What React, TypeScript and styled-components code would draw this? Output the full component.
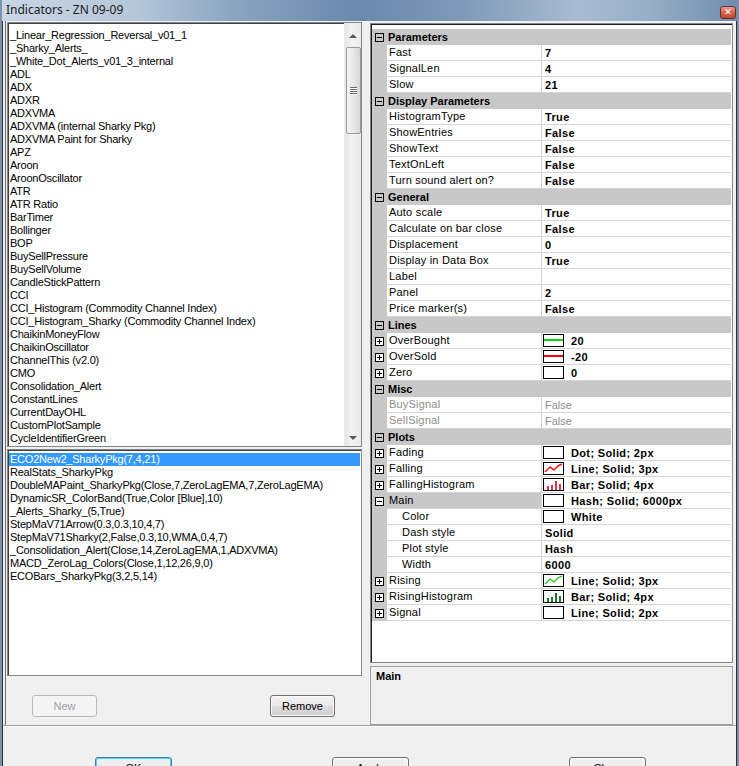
import React from "react";
import styled, { createGlobalStyle } from "styled-components";

const GlobalStyle = createGlobalStyle`
  html, body {
    margin: 0;
    padding: 0;
    background: #f0f0f0;
  }
  * {
    box-sizing: border-box;
  }
`;

const Window = styled.div`
  width: 739px;
  height: 766px;
  overflow: hidden;
  display: flex;
  flex-direction: column;
  background: #f0f0f0;
  border-left: 2px solid #7d93ad;
  border-right: 2px solid #7d93ad;
  font-family: "Liberation Sans", Arial, sans-serif;
  font-size: 11px;
  color: #000;
`;

const TitleBar = styled.div`
  height: 21px;
  flex: none;
  display: flex;
  justify-content: space-between;
  align-items: flex-start;
  margin: 0 -2px;
  padding: 0 3px 0 6px;
  background: linear-gradient(
    90deg,
    #c9d6e4 0%,
    #b6c7da 18%,
    #8aa4c1 32%,
    #6a89ad 48%,
    #7d98b8 62%,
    #a9bbd0 78%,
    #98aec8 88%,
    #6f8cae 100%
  );
`;

const Title = styled.span`
  font-family: "Noto Sans", "Open Sans", sans-serif;
  font-size: 12px;
  line-height: 20px;
  color: #1a1a1a;
`;

const CloseButton = styled.div`
  width: 16px;
  height: 13px;
  margin-top: 6px;
  border: 1px solid #6b2c22;
  border-radius: 3px;
  background: linear-gradient(180deg, #e9a08e 0%, #d4654f 50%, #c2452f 100%);
  display: flex;
  align-items: center;
  justify-content: center;
  color: #fff;
  font-family: "DejaVu Sans", sans-serif;
  font-size: 9px;
  font-weight: bold;
  line-height: 1;
`;

const Client = styled.div`
  flex: 1;
  display: flex;
  flex-direction: column;
  border-left: 1px solid #2c2f33;
  border-right: 1px solid #2c2f33;
`;

const Split = styled.div`
  height: 705px;
  flex: none;
  display: flex;
  border-bottom: 1px solid #a0a0a0;
  box-shadow: 0 1px 0 #ffffff;
`;

const LeftPane = styled.div`
  width: 358px;
  margin-left: 2px;
  padding: 1px 0 0 1px;
  border-left: 1px solid #6f6f6f;
  display: flex;
  flex-direction: column;
`;

const ListBox = styled.div<{ $height: number; $gap?: number }>`
  width: 355px;
  height: ${(p) => p.$height}px;
  margin-top: ${(p) => p.$gap || 0}px;
  flex: none;
  display: flex;
  background: #fff;
  border: 1px solid #828790;
  box-shadow: inset 1px 1px 0 #3f3f3f;
  overflow: hidden;
`;

const Items = styled.div<{ $pad: number }>`
  flex: 1;
  padding: ${(p) => p.$pad}px 1px 0 1px;
  letter-spacing: -0.22px;
`;

const Item = styled.div<{ $selected?: boolean }>`
  height: 13px;
  line-height: 13px;
  padding-left: 1px;
  white-space: nowrap;
  background: ${(p) => (p.$selected ? "#3399ff" : "transparent")};
  color: ${(p) => (p.$selected ? "#fff" : "#000")};
`;

const ScrollBar = styled.div`
  width: 17px;
  flex: none;
  display: flex;
  flex-direction: column;
  align-items: center;
  background: linear-gradient(90deg, #e6e6e6, #f2f2f2 40%, #eaeaea);
  border-left: 1px solid #ececec;
`;

const Arrow = styled.div<{ $down?: boolean }>`
  height: 17px;
  width: 17px;
  flex: none;
  display: flex;
  align-items: center;
  justify-content: center;
  margin-top: ${(p) => (p.$down ? 0 : 4)}px;
  &::before {
    content: "";
    width: 0;
    height: 0;
    border-left: 4px solid transparent;
    border-right: 4px solid transparent;
    ${(p) =>
      p.$down ? "border-top: 4px solid #5a5a5a;" : "border-bottom: 4px solid #5a5a5a;"}
  }
`;

const Thumb = styled.div`
  width: 15px;
  height: 87px;
  margin-top: 3px;
  flex: none;
  border: 1px solid #9b9b9b;
  border-radius: 2px;
  background: linear-gradient(90deg, #f4f4f4 0%, #e8e8e8 50%, #d6d6d6 100%);
  display: flex;
  flex-direction: column;
  align-items: center;
  justify-content: center;
  gap: 1px;
`;

const Grip = styled.div`
  width: 7px;
  height: 1px;
  background: #6b6b6b;
  box-shadow: 0 1px 0 #fff;
`;

const Spacer = styled.div`
  flex: 1;
`;

const ButtonRow = styled.div`
  display: flex;
  padding: 19px 0 0 25px;
  gap: 173px;
`;

const Button = styled.div<{ $disabled?: boolean; $default?: boolean; $width?: number }>`
  width: ${(p) => p.$width || 65}px;
  height: 22px;
  flex: none;
  display: flex;
  align-items: center;
  justify-content: center;
  border-radius: 3px;
  border: 1px solid
    ${(p) => (p.$disabled ? "#b7babc" : p.$default ? "#3c7fb1" : "#707070")};
  background: ${(p) =>
    p.$disabled
      ? "#f4f4f4"
      : "linear-gradient(180deg, #f2f2f2 0%, #ebebeb 45%, #dddddd 50%, #cfcfcf 100%)"};
  box-shadow: ${(p) =>
    p.$default ? "inset 0 0 0 1px #48d4ff" : p.$disabled ? "none" : "inset 0 0 0 1px #fcfcfc"};
  color: ${(p) => (p.$disabled ? "#a0a0a0" : "#000")};
  font-size: 11px;
`;

const RightPane = styled.div`
  width: 363px;
  margin-left: 7px;
  padding-top: 2px;
  display: flex;
  flex-direction: column;
`;

const Grid = styled.div`
  height: 640px;
  flex: none;
  background: #fff;
  border: 1px solid #828790;
  box-shadow: inset 1px 1px 0 #1e1e1e;
  padding: 5px 1px 0 1px;
  overflow: hidden;
`;

const LINE = "#d4d4d4";
const CAT = "#c8c8c8";

const CategoryRow = styled.div`
  height: 16px;
  display: flex;
  align-items: center;
  background: ${CAT};
  font-weight: bold;
`;

const PropRow = styled.div`
  height: 16px;
  display: flex;
`;

const Margin = styled.div`
  width: 15px;
  flex: none;
  display: flex;
  align-items: center;
  justify-content: center;
  background: ${CAT};
`;

const Expander = styled.div`
  width: 9px;
  height: 9px;
  border: 1px solid #000;
  background: #fff;
  position: relative;
  &::before {
    content: "";
    position: absolute;
    left: 1px;
    top: 3px;
    width: 5px;
    height: 1px;
    background: #000;
  }
`;

const ExpanderPlus = styled(Expander)`
  &::after {
    content: "";
    position: absolute;
    left: 3px;
    top: 1px;
    width: 1px;
    height: 5px;
    background: #000;
  }
`;

const CatExpander = styled(Expander)`
  margin: 0 4px 0 3px;
  background: transparent;
`;

const LabelCell = styled.div<{ $indent?: boolean; $selected?: boolean; $disabled?: boolean }>`
  width: 155px;
  flex: none;
  padding-left: ${(p) => (p.$indent ? 15 : 2)}px;
  line-height: 15px;
  letter-spacing: 0.2px;
  white-space: nowrap;
  overflow: hidden;
  border-right: 1px solid ${LINE};
  border-bottom: 1px solid ${LINE};
  background: ${(p) => (p.$selected ? CAT : "#fff")};
  color: ${(p) => (p.$disabled ? "#8d8d8d" : "#000")};
`;

const ValueCell = styled.div<{ $disabled?: boolean; $swatch?: boolean }>`
  flex: 1;
  display: flex;
  align-items: center;
  gap: 7px;
  padding-left: ${(p) => (p.$swatch ? 1 : 3)}px;
  border-bottom: 1px solid ${LINE};
  font-weight: ${(p) => (p.$disabled ? "normal" : "bold")};
  letter-spacing: ${(p) => (p.$disabled ? 0 : 0.35)}px;
  color: ${(p) => (p.$disabled ? "#8d8d8d" : "#000")};
  white-space: nowrap;
`;

const Description = styled.div`
  height: 59px;
  margin-top: 3px;
  border: 1px solid #a0a0a0;
  padding: 3px 5px;
  font-weight: bold;
`;

const Footer = styled.div`
  flex: 1;
  display: flex;
  padding: 31px 0 0 92px;
  gap: 160px;
`;

type SwatchKind = "green" | "red" | "white" | "fallLine" | "fallBars" | "riseLine" | "riseBars";

const Swatch = ({ kind }: { kind: SwatchKind }) => {
  const red = "#ef1f1f";
  const green = "#22c322";
  return (
    <svg width="21" height="13" viewBox="0 0 21 13" style={{ flex: "none" }}>
      <rect x="0.5" y="0.5" width="20" height="12" fill="#fff" stroke="#000" />
      {kind === "green" && <rect x="1" y="5" width="19" height="2" fill="#00e000" />}
      {kind === "red" && <rect x="1" y="5" width="19" height="2" fill="#ff0000" />}
      {kind === "fallLine" && (
        <polyline points="2,10 7,5 11,8 15,4 19,2" fill="none" stroke={red} strokeWidth="1.6" />
      )}
      {kind === "riseLine" && (
        <polyline points="2,10 7,5 11,8 15,4 19,2" fill="none" stroke={green} strokeWidth="1.3" />
      )}
      {(kind === "fallBars" || kind === "riseBars") && (
        <g fill={kind === "fallBars" ? "#e8304e" : "#1f7a1f"}>
          <rect x="4" y="8" width="2" height="4" />
          <rect x="8" y="7" width="2" height="5" />
          <rect x="12" y="3" width="2" height="9" />
          <rect x="16" y="6" width="2" height="6" />
        </g>
      )}
    </svg>
  );
};

const indicators = [
  "_Linear_Regression_Reversal_v01_1",
  "_Sharky_Alerts_",
  "_White_Dot_Alerts_v01_3_internal",
  "ADL",
  "ADX",
  "ADXR",
  "ADXVMA",
  "ADXVMA (internal Sharky Pkg)",
  "ADXVMA Paint for Sharky",
  "APZ",
  "Aroon",
  "AroonOscillator",
  "ATR",
  "ATR Ratio",
  "BarTimer",
  "Bollinger",
  "BOP",
  "BuySellPressure",
  "BuySellVolume",
  "CandleStickPattern",
  "CCI",
  "CCI_Histogram (Commodity Channel Index)",
  "CCI_Histogram_Sharky (Commodity Channel Index)",
  "ChaikinMoneyFlow",
  "ChaikinOscillator",
  "ChannelThis (v2.0)",
  "CMO",
  "Consolidation_Alert",
  "ConstantLines",
  "CurrentDayOHL",
  "CustomPlotSample",
  "CycleIdentifierGreen",
];

const applied = [
  "ECO2New2_SharkyPkg(7,4,21)",
  "RealStats_SharkyPkg",
  "DoubleMAPaint_SharkyPkg(Close,7,ZeroLagEMA,7,ZeroLagEMA)",
  "DynamicSR_ColorBand(True,Color [Blue],10)",
  "_Alerts_Sharky_(5,True)",
  "StepMaV71Arrow(0.3,0.3,10,4,7)",
  "StepMaV71Sharky(2,False,0.3,10,WMA,0,4,7)",
  "_Consolidation_Alert(Close,14,ZeroLagEMA,1,ADXVMA)",
  "MACD_ZeroLag_Colors(Close,1,12,26,9,0)",
  "ECOBars_SharkyPkg(3,2,5,14)",
];

type Prop = {
  label: string;
  value: string;
  swatch?: SwatchKind;
  expand?: "plus" | "minus";
  indent?: boolean;
  selected?: boolean;
  disabled?: boolean;
};

type Category = { name: string; props: Prop[] };

const categories: Category[] = [
  {
    name: "Parameters",
    props: [
      { label: "Fast", value: "7" },
      { label: "SignalLen", value: "4" },
      { label: "Slow", value: "21" },
    ],
  },
  {
    name: "Display Parameters",
    props: [
      { label: "HistogramType", value: "True" },
      { label: "ShowEntries", value: "False" },
      { label: "ShowText", value: "False" },
      { label: "TextOnLeft", value: "False" },
      { label: "Turn sound alert on?", value: "False" },
    ],
  },
  {
    name: "General",
    props: [
      { label: "Auto scale", value: "True" },
      { label: "Calculate on bar close", value: "False" },
      { label: "Displacement", value: "0" },
      { label: "Display in Data Box", value: "True" },
      { label: "Label", value: "" },
      { label: "Panel", value: "2" },
      { label: "Price marker(s)", value: "False" },
    ],
  },
  {
    name: "Lines",
    props: [
      { label: "OverBought", value: "20", swatch: "green", expand: "plus" },
      { label: "OverSold", value: "-20", swatch: "red", expand: "plus" },
      { label: "Zero", value: "0", swatch: "white", expand: "plus" },
    ],
  },
  {
    name: "Misc",
    props: [
      { label: "BuySignal", value: "False", disabled: true },
      { label: "SellSignal", value: "False", disabled: true },
    ],
  },
  {
    name: "Plots",
    props: [
      { label: "Fading", value: "Dot; Solid; 2px", swatch: "white", expand: "plus" },
      { label: "Falling", value: "Line; Solid; 3px", swatch: "fallLine", expand: "plus" },
      { label: "FallingHistogram", value: "Bar; Solid; 4px", swatch: "fallBars", expand: "plus" },
      { label: "Main", value: "Hash; Solid; 6000px", swatch: "white", expand: "minus", selected: true },
      { label: "Color", value: "White", swatch: "white", indent: true },
      { label: "Dash style", value: "Solid", indent: true },
      { label: "Plot style", value: "Hash", indent: true },
      { label: "Width", value: "6000", indent: true },
      { label: "Rising", value: "Line; Solid; 3px", swatch: "riseLine", expand: "plus" },
      { label: "RisingHistogram", value: "Bar; Solid; 4px", swatch: "riseBars", expand: "plus" },
      { label: "Signal", value: "Line; Solid; 2px", swatch: "white", expand: "plus" },
    ],
  },
];

export default function App() {
  return (
    <>
      <GlobalStyle />
      <Window>
        <TitleBar>
          <Title>Indicators - ZN 09-09</Title>
          <CloseButton>✕</CloseButton>
        </TitleBar>
        <Client>
          <Split>
            <LeftPane>
              <ListBox $height={425}>
                <Items $pad={6}>
                  {indicators.map((name) => (
                    <Item key={name}>{name}</Item>
                  ))}
                </Items>
                <ScrollBar>
                  <Arrow />
                  <Thumb>
                    <Grip />
                    <Grip />
                    <Grip />
                    <Grip />
                  </Thumb>
                  <Spacer />
                  <Arrow $down />
                </ScrollBar>
              </ListBox>
              <ListBox $height={227} $gap={2}>
                <Items $pad={3}>
                  {applied.map((name, i) => (
                    <Item key={name} $selected={i === 0}>
                      {name}
                    </Item>
                  ))}
                </Items>
              </ListBox>
              <ButtonRow>
                <Button $disabled>New</Button>
                <Button>Remove</Button>
              </ButtonRow>
            </LeftPane>
            <RightPane>
              <Grid>
                {categories.map((cat) => (
                  <React.Fragment key={cat.name}>
                    <CategoryRow>
                      <CatExpander />
                      {cat.name}
                    </CategoryRow>
                    {cat.props.map((p) => (
                      <PropRow key={p.label}>
                        <Margin>
                          {p.expand === "plus" && <ExpanderPlus />}
                          {p.expand === "minus" && <Expander />}
                        </Margin>
                        <LabelCell $indent={p.indent} $selected={p.selected} $disabled={p.disabled}>
                          {p.label}
                        </LabelCell>
                        <ValueCell $disabled={p.disabled} $swatch={!!p.swatch}>
                          {p.swatch && <Swatch kind={p.swatch} />}
                          {p.value}
                        </ValueCell>
                      </PropRow>
                    ))}
                  </React.Fragment>
                ))}
              </Grid>
              <Description>Main</Description>
            </RightPane>
          </Split>
          <Footer>
            <Button $default $width={77}>OK</Button>
            <Button $width={77}>Apply</Button>
            <Button $width={77}>Close</Button>
          </Footer>
        </Client>
      </Window>
    </>
  );
}
